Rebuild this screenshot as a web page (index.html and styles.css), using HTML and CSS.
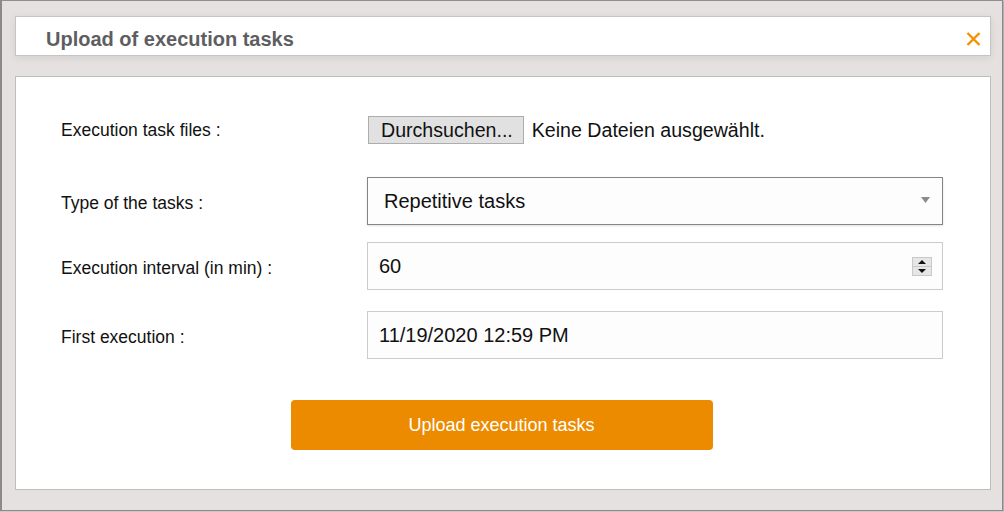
FILE: index.html
```html
<!DOCTYPE html>
<html>
<head>
<meta charset="utf-8">
<title>Upload of execution tasks</title>
<link rel="stylesheet" href="styles.css">
</head>
<body>
<div class="frame">
  <div class="header">
    <h1 class="title">Upload of execution tasks</h1>
    <svg class="close" width="15" height="14" viewBox="0 0 15 14"><path d="M1.5 1 L13.5 13 M13.5 1 L1.5 13" stroke="#f39200" stroke-width="2.4" fill="none"/></svg>
  </div>
  <div class="body">
    <div class="row row-file">
      <div class="label">Execution task files :</div>
      <div class="file">
        <span class="file-btn">Durchsuchen...</span>
        <span class="file-text">Keine Dateien ausgewählt.</span>
      </div>
    </div>
    <div class="row row-select">
      <div class="label label-low">Type of the tasks :</div>
      <div class="field field-select">
        <span class="field-text">Repetitive tasks</span>
        <svg class="arrow" width="9" height="6" viewBox="0 0 9 6"><polygon points="0,0 9,0 4.5,6" fill="#8a8a8a"/></svg>
      </div>
    </div>
    <div class="row row-number">
      <div class="label label-low">Execution interval (in min) :</div>
      <div class="field">
        <span class="field-text">60</span>
        <svg class="spin" width="20" height="19" viewBox="0 0 20 19">
          <rect x="0.5" y="0.5" width="19" height="18" fill="#e6e6e6" stroke="#c9c9c9"/>
          <line x1="0.5" y1="9.5" x2="19.5" y2="9.5" stroke="#c9c9c9"/>
          <polygon points="6,7 14,7 10,3" fill="#111"/>
          <polygon points="6,12 14,12 10,16" fill="#111"/>
        </svg>
      </div>
    </div>
    <div class="row row-date">
      <div class="label label-low">First execution :</div>
      <div class="field">
        <span class="field-text">11/19/2020 12:59 PM</span>
      </div>
    </div>
    <div class="actions">
      <button class="submit">Upload execution tasks</button>
    </div>
  </div>
</div>
</body>
</html>
```

FILE: styles.css
```css
* { box-sizing: border-box; }

html, body {
  margin: 0;
  padding: 0;
  background: #c9c9c9;
}

body {
  font-family: "Liberation Sans", Arial, sans-serif;
  color: #111;
}

.frame {
  width: 1003px;
  height: 511px;
  background: #e4e1e0;
  border-top: 1px solid #8e8e8e;
  border-left: 2px solid #8a8a8a;
  border-right: 1px solid #8a8a8a;
  border-bottom: 1px solid #8a8a8a;
  box-shadow: 1px 1px 0 #b0b0b0;
  padding: 15px 11px 20px 13px;
}

.header {
  height: 40px;
  background: #fff;
  border: 1px solid #c4c4c4;
  box-shadow: 0 2px 8px rgba(0, 0, 0, 0.08);
  display: flex;
  align-items: flex-start;
  justify-content: space-between;
  padding: 10px 9px 4px 30px;
}

.title {
  margin: 0;
  font-size: 20px;
  line-height: 24px;
  font-weight: bold;
  color: #5e5e62;
}

.close {
  margin-top: 5px;
  display: block;
}

.body {
  margin-top: 20px;
  height: 414px;
  background: #fff;
  border: 1px solid #bdbdbd;
  padding: 39px 47px 39px 45px;
  display: flex;
  flex-direction: column;
}

.row {
  display: flex;
  align-items: center;
}

.label {
  width: 306px;
  flex: none;
  font-size: 17.5px;
}

.label-low {
  padding-top: 5px;
}

.row-file {
  height: 28px;
}

.row-select {
  margin-top: 33px;
}

.row-number {
  margin-top: 17px;
}

.row-date {
  margin-top: 21px;
}

.file {
  display: flex;
  align-items: center;
  font-size: 19.6px;
}

.file-btn {
  height: 28px;
  padding: 0 10px 0 12px;
  background: #e1e1e1;
  border: 1px solid #adadad;
  display: flex;
  align-items: center;
  margin-left: 1px;
}

.file-text {
  margin-left: 8px;
}

.field {
  flex: 1;
  height: 48px;
  border: 1px solid #cccccc;
  background: #fdfdfd;
  display: flex;
  align-items: center;
  justify-content: space-between;
  padding: 0 10px 0 11px;
  font-size: 20px;
}

.field-select {
  border-color: #858585;
  background: #fdfdfd;
  box-shadow: 0 1px 2px rgba(0, 0, 0, 0.12);
  padding: 0 12px 0 16px;
}

.arrow {
  display: block;
  margin-top: -2px;
}

.spin {
  display: block;
}

.actions {
  margin-top: 41px;
  display: flex;
  justify-content: center;
}

.submit {
  width: 422px;
  height: 50px;
  border: none;
  border-radius: 4px;
  background: #ec8b00;
  color: #fff;
  font-family: "Liberation Sans", Arial, sans-serif;
  font-size: 18px;
  margin-right: 1px;
}
```
